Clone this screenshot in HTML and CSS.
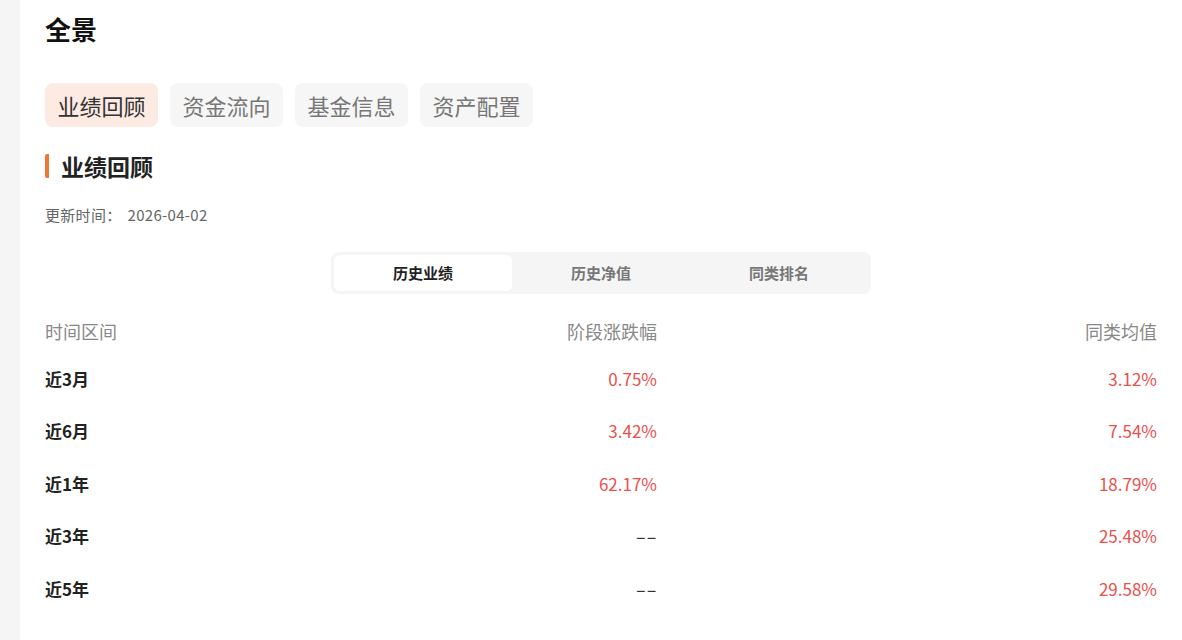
FILE: index.html
```html
<!DOCTYPE html>
<html lang="zh-CN">
<head>
    <meta charset="UTF-8">
    <meta name="viewport" content="width=device-width, initial-scale=1.0">
    <title>全景</title>
    <link rel="stylesheet" href="styles.css">
</head>
<body>
    <div class="page">
        <div class="side"></div>
        <div class="main">
            <div class="page-title">全景</div>

            <div class="tabs">
                <div class="tab active">业绩回顾</div>
                <div class="tab">资金流向</div>
                <div class="tab">基金信息</div>
                <div class="tab">资产配置</div>
            </div>

            <div class="section-title">业绩回顾</div>
            <div class="update-time"><span class="label">更新时间：</span>2026-04-02</div>

            <div class="segment">
                <div class="seg active">历史业绩</div>
                <div class="seg">历史净值</div>
                <div class="seg">同类排名</div>
            </div>

            <div class="table">
                <div class="row head">
                    <div class="col-name">时间区间</div>
                    <div class="col-change">阶段涨跌幅</div>
                    <div class="col-avg">同类均值</div>
                </div>
                <div class="row">
                    <div class="col-name">近3月</div>
                    <div class="col-change up">0.75%</div>
                    <div class="col-avg up">3.12%</div>
                </div>
                <div class="row">
                    <div class="col-name">近6月</div>
                    <div class="col-change up">3.42%</div>
                    <div class="col-avg up">7.54%</div>
                </div>
                <div class="row">
                    <div class="col-name">近1年</div>
                    <div class="col-change up">62.17%</div>
                    <div class="col-avg up">18.79%</div>
                </div>
                <div class="row">
                    <div class="col-name">近3年</div>
                    <div class="col-change"><span class="empty">--</span></div>
                    <div class="col-avg up">25.48%</div>
                </div>
                <div class="row">
                    <div class="col-name">近5年</div>
                    <div class="col-change"><span class="empty">--</span></div>
                    <div class="col-avg up">29.58%</div>
                </div>
            </div>
        </div>
    </div>
</body>
</html>
```

FILE: styles.css
```css
body {
    margin: 0;
    font-family: "Noto Sans CJK SC", "Noto Sans", sans-serif;
    background-color: #ffffff;
    color: #222;
}
.page {
    display: flex;
    min-height: 640px;
}
.side {
    width: 20px;
    flex-shrink: 0;
    background-color: #f5f5f5;
}
.main {
    flex: 1;
    padding: 11px 25px 0 25px;
}
.page-title {
    font-size: 26px;
    font-weight: bold;
    line-height: 36px;
    color: #111;
}
.tabs {
    display: flex;
    gap: 12px;
    margin-top: 36px;
}
.tab {
    height: 44px;
    line-height: 44px;
    padding: 0 12.5px;
    font-size: 22px;
    color: #777;
    background-color: #f6f6f6;
    border-radius: 8px;
}
.tab.active {
    background-color: #fdeae3;
    color: #333;
}
.section-title {
    margin-top: 27px;
    font-size: 23px;
    font-weight: bold;
    line-height: 24px;
    color: #222;
    border-left: 4px solid #f07634;
    border-radius: 2px;
    padding-left: 12px;
}
.update-time {
    margin-top: 27px;
    font-size: 15px;
    line-height: 20px;
    color: #666;
    letter-spacing: 0.3px;
}
.update-time .label {
    margin-right: 6px;
}
.segment {
    display: flex;
    width: 534px;
    margin: 27px auto 0 auto;
    padding: 3px;
    background-color: #f5f5f5;
    border-radius: 8px;
}
.seg {
    flex: 1;
    height: 36px;
    line-height: 36px;
    text-align: center;
    font-size: 15px;
    font-weight: bold;
    color: #777;
    border-radius: 6px;
}
.seg.active {
    background-color: #fff;
    color: #222;
}
.table {
    margin-top: 15px;
}
.row {
    display: flex;
    align-items: center;
    height: 52.5px;
    font-size: 17px;
}
.row.head {
    height: 43px;
    font-size: 18px;
    color: #888;
}
.col-name {
    width: 300px;
}
.row:not(.head) .col-name {
    font-weight: bold;
    color: #222;
}
.col-change {
    width: 312px;
    text-align: right;
    color: #333;
}
.col-avg {
    flex: 1;
    text-align: right;
}
.row.head .col-change, .row.head .col-avg {
    color: #888;
}
.empty {
    display: inline-block;
    transform: scaleX(1.8);
    transform-origin: right center;
}
.up {
    color: #e9504e;
}
```
